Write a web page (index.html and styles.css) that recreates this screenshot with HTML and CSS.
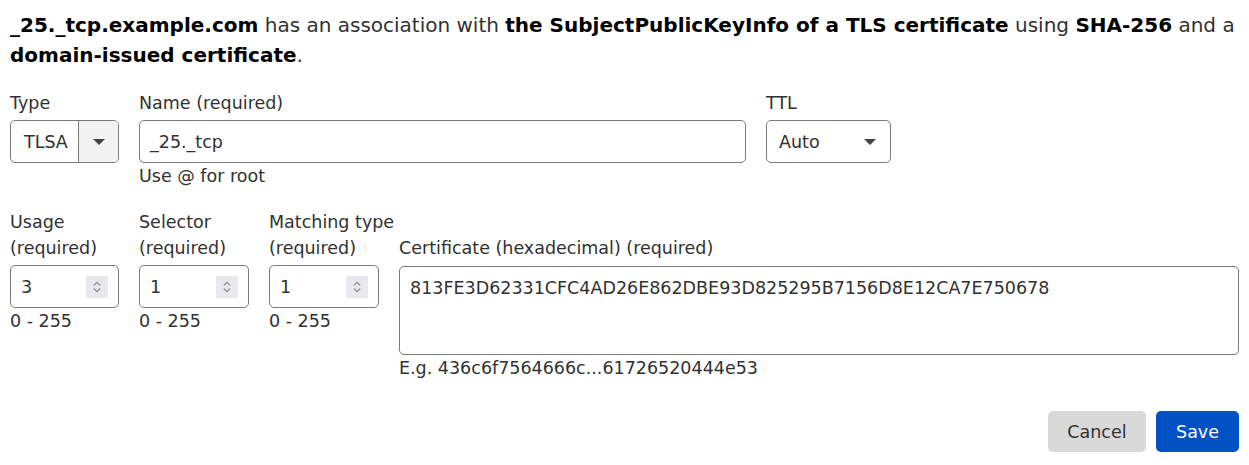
FILE: index.html
```html
<!DOCTYPE html>
<html lang="en">
<head>
<meta charset="utf-8">
<title>TLSA record</title>
<link rel="stylesheet" href="styles.css">
</head>
<body>
<div class="page">
  <p class="summary"><b>_25._tcp.example.com</b> has an association with <b>the SubjectPublicKeyInfo of a TLS certificate</b> using <b>SHA-256</b> and a <b>domain-issued certificate</b>.</p>

  <div class="row row-top">
    <div class="field f-type">
      <label class="label">Type</label>
      <div class="select-split">
        <span class="select-value">TLSA</span>
        <span class="select-btn"><span class="caret"></span></span>
      </div>
    </div>
    <div class="field f-name">
      <label class="label">Name (required)</label>
      <div class="input">_25._tcp</div>
      <div class="help">Use @ for root</div>
    </div>
    <div class="field f-ttl">
      <label class="label">TTL</label>
      <div class="select">
        <span>Auto</span>
        <span class="caret"></span>
      </div>
    </div>
  </div>

  <div class="grid-data">
    <label class="label glabel">Usage<br>(required)</label>
    <label class="label glabel">Selector<br>(required)</label>
    <label class="label glabel">Matching type<br>(required)</label>
    <label class="label glabel">Certificate (hexadecimal) (required)</label>

    <div class="cell">
      <div class="input num"><span>3</span><span class="spin"><svg width="10" height="16" viewBox="0 0 10 16"><path d="M1.8 6.5 L5 3.3 L8.2 6.5 M1.8 9.5 L5 12.7 L8.2 9.5" fill="none" stroke="#8c8c94" stroke-width="1.1"/></svg></span></div>
      <div class="help">0 - 255</div>
    </div>
    <div class="cell">
      <div class="input num"><span>1</span><span class="spin"><svg width="10" height="16" viewBox="0 0 10 16"><path d="M1.8 6.5 L5 3.3 L8.2 6.5 M1.8 9.5 L5 12.7 L8.2 9.5" fill="none" stroke="#8c8c94" stroke-width="1.1"/></svg></span></div>
      <div class="help">0 - 255</div>
    </div>
    <div class="cell">
      <div class="input num"><span>1</span><span class="spin"><svg width="10" height="16" viewBox="0 0 10 16"><path d="M1.8 6.5 L5 3.3 L8.2 6.5 M1.8 9.5 L5 12.7 L8.2 9.5" fill="none" stroke="#8c8c94" stroke-width="1.1"/></svg></span></div>
      <div class="help">0 - 255</div>
    </div>
    <div class="cell">
      <div class="textarea">813FE3D62331CFC4AD26E862DBE93D825295B7156D8E12CA7E750678</div>
      <div class="help">E.g. 436c6f7564666c...61726520444e53</div>
    </div>
  </div>

  <div class="actions">
    <button class="btn btn-cancel">Cancel</button>
    <button class="btn btn-save">Save</button>
  </div>
</div>
</body>
</html>
```

FILE: styles.css
```css
* { box-sizing: border-box; }
html, body { margin: 0; padding: 0; background: #fff; }
body {
  font-family: "DejaVu Sans", sans-serif;
  color: #313131;
  font-size: 17.5px;
}
.page { padding: 10px; }

.summary {
  margin: 0;
  font-size: 20px;
  line-height: 30px;
}
.summary b { color: #000; font-weight: bold; }

.label {
  display: block;
  line-height: 26px;
  margin-bottom: 4px;
  white-space: nowrap;
}
.help { line-height: 26px; white-space: nowrap; }

.row { display: flex; gap: 20px; }
.row-top { margin-top: 20px; }
.f-type { width: 109px; }
.f-name { width: 607px; }
.f-ttl { width: 125px; }

.input, .select, .select-split, .textarea {
  border: 1px solid #7a7a7a;
  border-radius: 5px;
  height: 43px;
  background: #fff;
}
.input {
  display: flex;
  align-items: center;
  padding: 0 10px;
}
.select {
  display: flex;
  align-items: center;
  justify-content: space-between;
  padding: 0 14px 0 12px;
}
.select-split {
  display: flex;
  overflow: hidden;
}
.select-value {
  width: 68px;
  display: flex;
  align-items: center;
  padding-left: 13px;
  border-right: 1px solid #7a7a7a;
}
.select-btn {
  flex: 1;
  background: #f2f2f2;
  display: flex;
  align-items: center;
  justify-content: center;
}
.caret {
  width: 0; height: 0;
  border-left: 6px solid transparent;
  border-right: 6px solid transparent;
  border-top: 6px solid #444;
}

.grid-data {
  display: grid;
  grid-template-columns: 109px 110px 110px 1fr;
  column-gap: 20px;
  margin-top: 20px;
}
.glabel { align-self: end; }
.num { justify-content: space-between; padding-right: 10px; }
.spin {
  width: 22px; height: 22px;
  background: #e9e9ed;
  display: flex;
  align-items: center;
  justify-content: center;
}
.textarea {
  height: 89px;
  padding: 8px 10px;
  line-height: 26px;
  margin-top: 1px;
}

.actions {
  display: flex;
  justify-content: flex-end;
  gap: 10px;
  margin-top: 30px;
}
.btn {
  font-family: "DejaVu Sans", sans-serif;
  font-size: 17.5px;
  height: 41px;
  border: none;
  border-radius: 5px;
  padding: 0 20px;
}
.btn-cancel { background: #d9d9d9; color: #313131; padding: 0 19.5px; }
.btn-save { background: #0051c3; color: #fff; }
```
